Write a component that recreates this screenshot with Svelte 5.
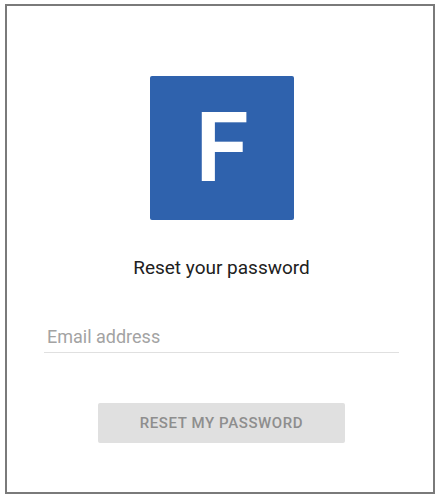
<script>
  let email = $state("");
</script>

<div class="page">
  <main class="frame">
    <div class="logo">F</div>
    <h1>Reset your password</h1>
    <form on:submit|preventDefault>
      <input type="email" placeholder="Email address" bind:value={email} />
      <button type="submit" disabled={!email}>RESET MY PASSWORD</button>
    </form>
  </main>
</div>

<style>
  :global(body) {
    background: #fff;
    font-family: Roboto, "Liberation Sans", sans-serif;
  }
  .page {
    width: 439px;
    height: 500px;
    padding: 4px 4px 6px 5px;
    box-sizing: border-box;
  }
  .frame {
    height: 100%;
    box-sizing: border-box;
    border: 2px solid #7a7a7a;
    display: flex;
    flex-direction: column;
    align-items: center;
    padding: 70px 0 0 3px;
  }
  .logo {
    width: 144px;
    height: 144px;
    margin-left: 1px;
    background: #2f62ad;
    border-radius: 2px;
    color: #fff;
    font-size: 97px;
    font-weight: 600;
    line-height: 144px;
    text-align: center;
  }
  h1 {
    margin: 37px 0 0;
    font-size: 19px;
    font-weight: 400;
    line-height: 22px;
    color: #212121;
  }
  form {
    width: 100%;
    display: flex;
    flex-direction: column;
    align-items: center;
    margin-top: 42px;
  }
  input {
    width: 355px;
    height: 32px;
    box-sizing: border-box;
    padding: 0 3px;
    border: 0;
    border-bottom: 1px solid #e0e0e0;
    outline: none;
    background: transparent;
    font: 400 18px Roboto, sans-serif;
    color: #212121;
  }
  input::placeholder {
    color: #a3a3a3;
    opacity: 1;
  }
  button {
    width: 247px;
    height: 40px;
    margin-top: 50px;
    border: 0;
    border-radius: 2px;
    background: #e0e0e0;
    color: #8e8e8e;
    font: 500 15px Roboto, sans-serif;
    letter-spacing: 0.6px;
  }
</style>
